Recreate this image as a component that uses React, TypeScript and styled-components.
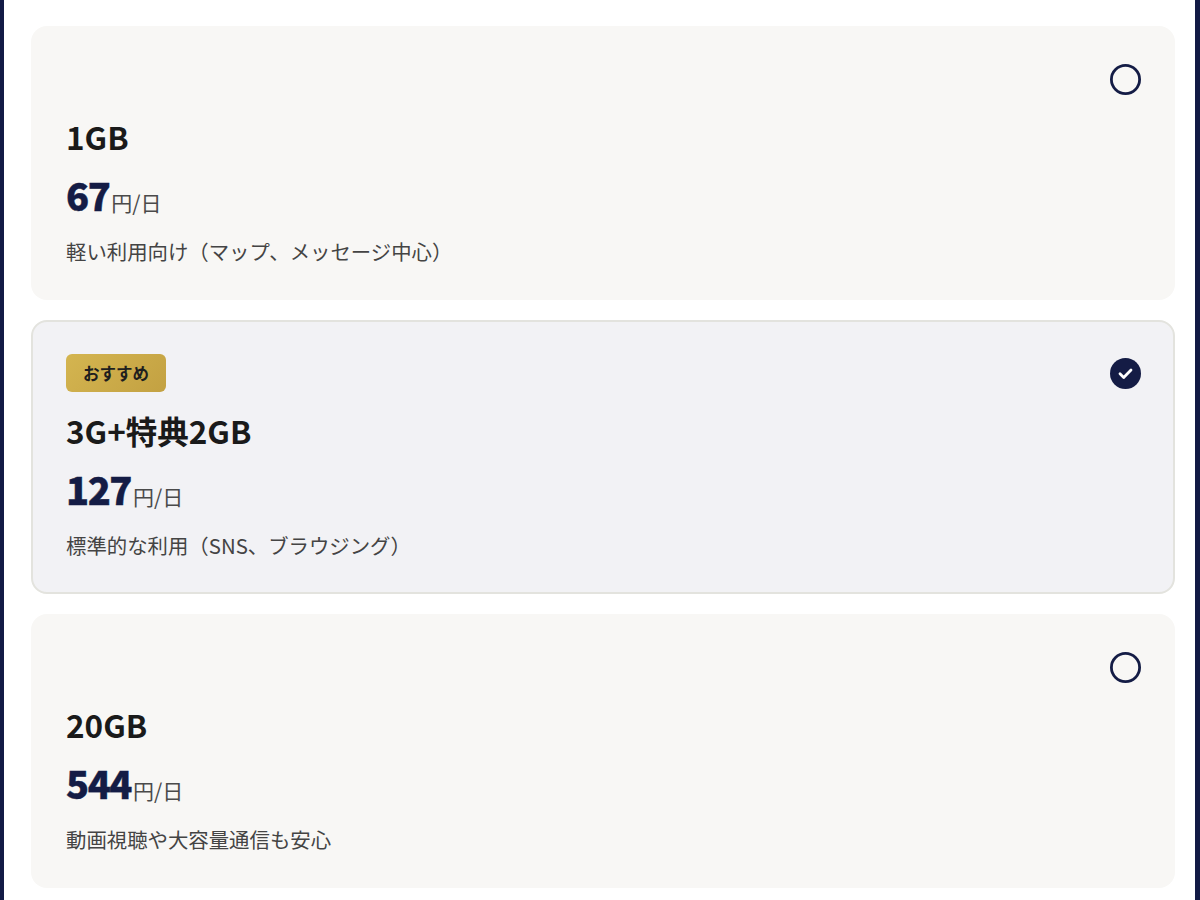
import React, { useState } from 'react';
import styled, { createGlobalStyle } from 'styled-components';

const GlobalStyle = createGlobalStyle`
  html, body {
    margin: 0;
    padding: 0;
    background: #121a45;
  }
  body {
    font-family: "Noto Sans CJK JP", "Noto Sans", sans-serif;
  }
`;

const Frame = styled.div`
  margin: 0 5px 0 4px;
  min-height: 100vh;
  background: #ffffff;
  padding: 26px 20px 26px 27px;
  box-sizing: border-box;
  display: flex;
  flex-direction: column;
  gap: 20px;
`;

const Card = styled.div<{ $selected: boolean }>`
  border-radius: 16px;
  border: 2px solid ${(p) => (p.$selected ? '#e3e3de' : 'transparent')};
  background: ${(p) => (p.$selected ? '#f2f2f5' : '#f8f7f5')};
  padding: 32px 32px 32px 33px;
  display: flex;
  flex-direction: column;
  cursor: pointer;
`;

const Header = styled.div`
  height: 38px;
  display: flex;
  align-items: center;
  justify-content: space-between;
`;

const Badge = styled.span<{ $hidden: boolean }>`
  visibility: ${(p) => (p.$hidden ? 'hidden' : 'visible')};
  height: 38px;
  width: 100px;
  box-sizing: border-box;
  display: inline-flex;
  align-items: center;
  justify-content: center;
  border-radius: 6px;
  background: linear-gradient(135deg, #d4b550 0%, #c3a142 100%);
  color: #1e1e1e;
  font-size: 16.5px;
  font-weight: 700;
`;

const Radio = styled.span`
  width: 31px;
  height: 31px;
  display: flex;
`;

const Title = styled.h3`
  margin: 18px 0 0;
  font-size: 31.5px;
  line-height: 40px;
  font-weight: 700;
  color: #1a1a1a;
`;

const PriceRow = styled.div`
  margin-top: 15px;
  height: 48px;
  display: flex;
  align-items: baseline;
`;

const Amount = styled.span`
  font-size: 38px;
  font-weight: 900;
  letter-spacing: -1.5px;
  -webkit-text-stroke: 0.4px #141c45;
  color: #141c45;
  line-height: 48px;
`;

const Unit = styled.span`
  font-size: 21px;
  color: #4a4a4a;
  margin-left: 2px;
`;

const Desc = styled.p`
  margin: 17px 0 0;
  font-size: 20.4px;
  line-height: 30px;
  color: #444;
`;

const RadioIcon = ({ checked }: { checked: boolean }) =>
  checked ? (
    <svg width="31" height="31" viewBox="0 0 31 31">
      <circle cx="15.5" cy="15.5" r="15.5" fill="#141c45" />
      <path d="M10 15.8l3.7 3.6 7.3-7.4" fill="none" stroke="#fff" strokeWidth="2.8" strokeLinecap="round" strokeLinejoin="round" />
    </svg>
  ) : (
    <svg width="31" height="31" viewBox="0 0 31 31">
      <circle cx="15.5" cy="15.5" r="14.1" fill="none" stroke="#141c45" strokeWidth="2.8" />
    </svg>
  );

const plans = [
  { id: '1gb', name: '1GB', price: '67', desc: '軽い利用向け（マップ、メッセージ中心）', recommended: false },
  { id: '3gb', name: '3G+特典2GB', price: '127', desc: '標準的な利用（SNS、ブラウジング）', recommended: true },
  { id: '20gb', name: '20GB', price: '544', desc: '動画視聴や大容量通信も安心', recommended: false },
];

export default function App() {
  const [selected, setSelected] = useState('3gb');

  return (
    <>
      <GlobalStyle />
      <Frame>
        {plans.map((plan) => (
          <Card key={plan.id} $selected={selected === plan.id} onClick={() => setSelected(plan.id)}>
            <Header>
              <Badge $hidden={!plan.recommended}>おすすめ</Badge>
              <Radio>
                <RadioIcon checked={selected === plan.id} />
              </Radio>
            </Header>
            <Title>{plan.name}</Title>
            <PriceRow>
              <Amount>{plan.price}</Amount>
              <Unit>円/日</Unit>
            </PriceRow>
            <Desc>{plan.desc}</Desc>
          </Card>
        ))}
      </Frame>
    </>
  );
}
